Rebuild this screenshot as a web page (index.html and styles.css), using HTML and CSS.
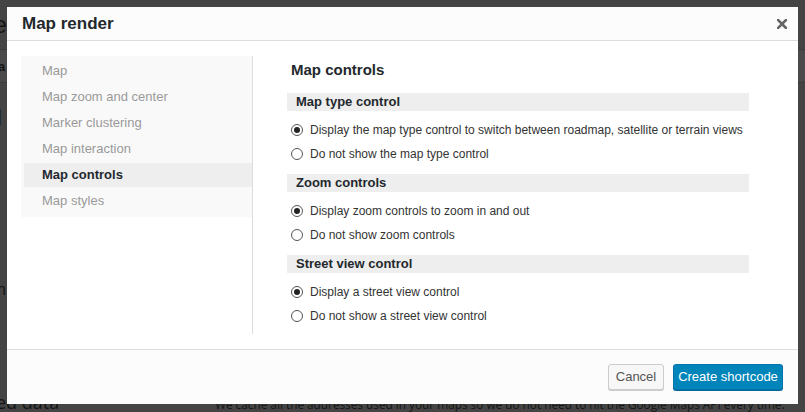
FILE: index.html
```html
<!DOCTYPE html>
<html>
<head>
<meta charset="utf-8">
<link rel="stylesheet" href="styles.css">
</head>
<body>
<div class="page">
  <div class="pg-top"><span class="pg-title">e</span></div>
  <div class="pg-tabs"><span class="pg-tab">a</span></div>
  <div class="pg-head"><span class="pg-big">l</span></div>
  <div class="pg-mid"><span class="pg-sm">n</span></div>
  <div class="pg-row">
    <span class="pg-h2">ed data</span>
    <span class="pg-desc">We cache all the addresses used in your maps so we do not need to hit the Google Maps API every time.</span>
  </div>
</div>

<div class="modal">
  <div class="modal-head">
    <h1 class="modal-title">Map render</h1>
    <span class="modal-close">
      <svg width="10" height="10" viewBox="0 0 10 10"><path d="M1 1 L9 9 M9 1 L1 9" stroke="#666" stroke-width="2.6" stroke-linecap="square"/></svg>
    </span>
  </div>
  <div class="modal-body">
    <ul class="side">
      <li class="side-item">Map</li>
      <li class="side-item">Map zoom and center</li>
      <li class="side-item">Marker clustering</li>
      <li class="side-item">Map interaction</li>
      <li class="side-item active">Map controls</li>
      <li class="side-item">Map styles</li>
    </ul>
    <div class="panel">
      <h2 class="panel-title">Map controls</h2>

      <div class="section-bar">Map type control</div>
      <div class="options">
        <label class="opt"><span class="radio checked"></span>Display the map type control to switch between roadmap, satellite or terrain views</label>
        <label class="opt"><span class="radio"></span>Do not show the map type control</label>
      </div>

      <div class="section-bar">Zoom controls</div>
      <div class="options">
        <label class="opt"><span class="radio checked"></span>Display zoom controls to zoom in and out</label>
        <label class="opt"><span class="radio"></span>Do not show zoom controls</label>
      </div>

      <div class="section-bar">Street view control</div>
      <div class="options">
        <label class="opt"><span class="radio checked"></span>Display a street view control</label>
        <label class="opt"><span class="radio"></span>Do not show a street view control</label>
      </div>
    </div>
  </div>
  <div class="modal-foot">
    <button class="btn btn-cancel">Cancel</button>
    <button class="btn btn-primary">Create shortcode</button>
  </div>
</div>
</body>
</html>
```

FILE: styles.css
```css
html, body {
  margin: 0;
  padding: 0;
}
body {
  width: 805px;
  height: 412px;
  overflow: hidden;
  background: #444444;
  font-family: "Liberation Sans", Arial, sans-serif;
  position: relative;
}

/* background page (dimmed) */
.page {
  display: flex;
  flex-direction: column;
  color: #151515;
}
.pg-top {
  height: 49px;
  border-bottom: 1px solid #3a3a3a;
  display: flex;
  align-items: center;
}
.pg-title {
  font-size: 23px;
  margin-left: -6px;
  margin-top: 2px;
}
.pg-tabs {
  height: 32px;
  background: #4a4a4a;
  border-bottom: 1px solid #3a3a3a;
  display: flex;
  align-items: center;
}
.pg-tab {
  font-size: 13px;
  font-weight: bold;
  margin-left: -2px;
}
.pg-head {
  height: 180px;
  padding-top: 22px;
  box-sizing: border-box;
}
.pg-big {
  font-size: 22px;
  margin-left: -3px;
}
.pg-mid {
  height: 130px;
  padding-top: 18px;
  box-sizing: border-box;
}
.pg-sm {
  font-size: 16px;
  margin-left: -3px;
}
.pg-row {
  display: flex;
  align-items: baseline;
  margin-top: -3px;
  white-space: nowrap;
}
.pg-h2 {
  font-family: "Open Sans", sans-serif;
  font-size: 18px;
  width: 219px;
  flex: none;
  margin-left: -4px;
}
.pg-desc {
  font-family: "Open Sans", sans-serif;
  font-size: 11.8px;
}

/* modal */
.modal {
  position: absolute;
  left: 7px;
  top: 7px;
  width: 791px;
  height: 397px;
  background: #fff;
  display: flex;
  flex-direction: column;
  color: #333;
}
.modal-head {
  height: 34px;
  box-sizing: border-box;
  background: #fcfcfc;
  border-bottom: 1px solid #dddddd;
  display: flex;
  align-items: center;
  justify-content: space-between;
  padding: 0 11px 0 15px;
}
.modal-title {
  margin: 0;
  font-size: 17px;
  font-weight: bold;
  color: #23282d;
}
.modal-close {
  display: flex;
  width: 10px;
  height: 10px;
}
.modal-body {
  height: 308px;
  display: flex;
  align-items: flex-start;
  padding: 15px 0 0 14px;
  box-sizing: border-box;
}
.side {
  list-style: none;
  margin: 0;
  padding: 3px 0 4px 3px;
  width: 231px;
  box-sizing: border-box;
  background: #f9f9f9;
  display: flex;
  flex-direction: column;
  gap: 2px;
}
.side-item {
  height: 24px;
  line-height: 24px;
  padding-left: 18px;
  font-size: 13px;
  color: #999;
}
.side-item.active {
  background: #eeeeee;
  color: #23282d;
  font-weight: bold;
}
.panel {
  border-left: 1px solid #dddddd;
  height: 278px;
  box-sizing: border-box;
  padding: 4px 0 0 34px;
  width: 497px;
}
.panel-title {
  margin: 0 0 13px 4px;
  font-size: 15px;
  line-height: 20px;
  font-weight: bold;
  color: #23282d;
}
.section-bar {
  height: 18px;
  line-height: 18px;
  background: #eeeeee;
  padding-left: 9px;
  font-size: 13px;
  font-weight: bold;
  color: #23282d;
}
.options {
  display: flex;
  flex-direction: column;
  gap: 2px;
  margin: 8px 0 9px 4px;
}
.opt {
  height: 22px;
  display: flex;
  align-items: center;
  gap: 7px;
  font-size: 12px;
  color: #333;
  white-space: nowrap;
}
.radio {
  width: 12px;
  height: 12px;
  box-sizing: border-box;
  border-radius: 50%;
  border: 1px solid #555;
  background: #fff;
  display: flex;
  align-items: center;
  justify-content: center;
  flex: none;
}
.radio.checked::after {
  content: "";
  width: 6px;
  height: 6px;
  border-radius: 50%;
  background: #222;
}
.modal-foot {
  flex: 1;
  background: #fcfcfc;
  border-top: 1px solid #dddddd;
  display: flex;
  align-items: center;
  justify-content: flex-end;
  gap: 9px;
  padding: 0 15px 1px 0;
}
.btn {
  height: 26px;
  box-sizing: border-box;
  border-radius: 3px;
  font-family: "Liberation Sans", Arial, sans-serif;
  font-size: 13px;
  padding: 0;
  margin: 0;
  white-space: nowrap;
}
.btn-cancel {
  width: 56px;
  background: #f7f7f7;
  border: 1px solid #cccccc;
  color: #555;
  box-shadow: 0 1px 0 #cccccc;
}
.btn-primary {
  width: 110px;
  background: #0085ba;
  border: 1px solid #0073aa;
  color: #fff;
  box-shadow: 0 1px 0 #006799;
}
```
